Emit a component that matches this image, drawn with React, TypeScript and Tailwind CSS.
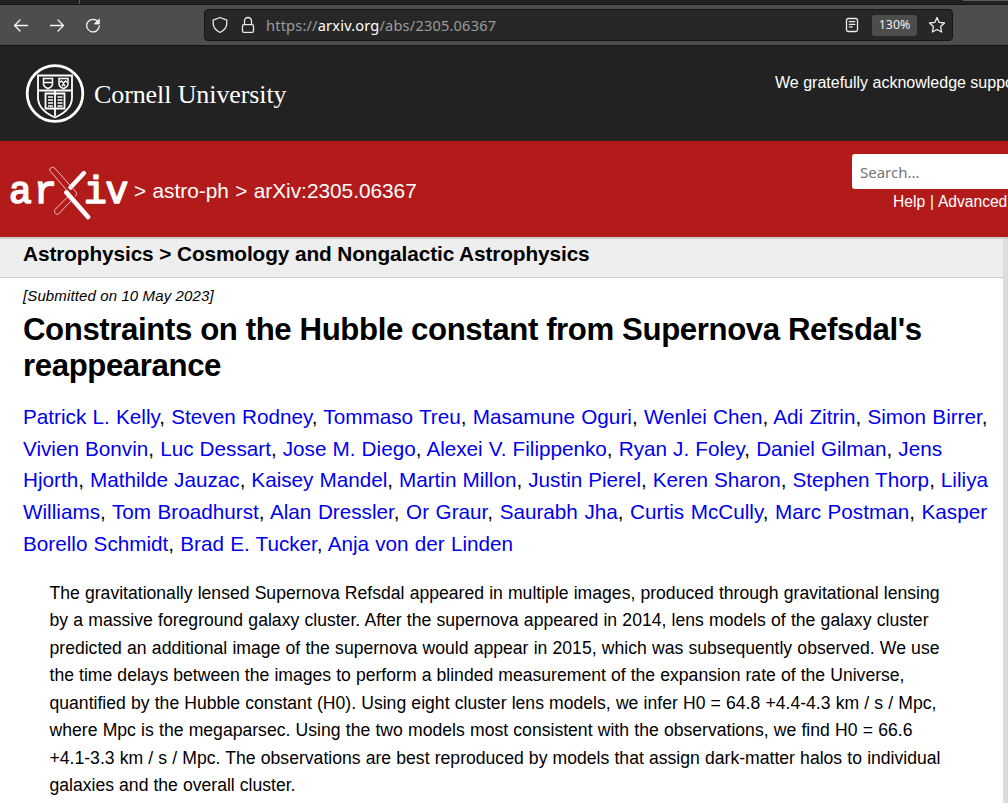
import React from "react";

const authorLines = [
  { width: "w-[964.500px]", names: ["Patrick L. Kelly", "Steven Rodney", "Tommaso Treu", "Masamune Oguri", "Wenlei Chen", "Adi Zitrin", "Simon Birrer"] },
  { width: "w-[919px]", names: ["Vivien Bonvin", "Luc Dessart", "Jose M. Diego", "Alexei V. Filippenko", "Ryan J. Foley", "Daniel Gilman", "Jens"] },
  { width: "w-[965px]", names: ["Hjorth", "Mathilde Jauzac", "Kaisey Mandel", "Martin Millon", "Justin Pierel", "Keren Sharon", "Stephen Thorp", "Liliya"] },
  { width: "w-[964px]", names: ["Williams", "Tom Broadhurst", "Alan Dressler", "Or Graur", "Saurabh Jha", "Curtis McCully", "Marc Postman", "Kasper"] },
  { width: "w-[490px]", names: ["Borello Schmidt", "Brad E. Tucker", "Anja von der Linden"] },
];

const abstractLines = [
  { width: "w-[890px]", text: "The gravitationally lensed Supernova Refsdal appeared in multiple images, produced through gravitational lensing" },
  { width: "w-[879px]", text: "by a massive foreground galaxy cluster. After the supernova appeared in 2014, lens models of the galaxy cluster" },
  { width: "w-[890px]", text: "predicted an additional image of the supernova would appear in 2015, which was subsequently observed. We use" },
  { width: "w-[855px]", text: "the time delays between the images to perform a blinded measurement of the expansion rate of the Universe," },
  { width: "w-[887px]", text: "quantified by the Hubble constant (H0). Using eight cluster lens models, we infer H0 = 64.8 +4.4-4.3 km / s / Mpc," },
  { width: "w-[863px]", text: "where Mpc is the megaparsec. Using the two models most consistent with the observations, we find H0 = 66.6" },
  { width: "w-[891px]", text: "+4.1-3.3 km / s / Mpc. The observations are best reproduced by models that assign dark-matter halos to individual" },
  { width: "w-[246px]", text: "galaxies and the overall cluster." },
];

function Toolbar() {
  return (
    <div className="flex h-[46px] flex-col bg-[#222]">
      <div className="flex h-[4px] shrink-0 justify-between">
        <div className="w-[80px] border-r border-[#5a5a5a]" />
        <div className="h-px w-[45px] bg-[#5a5a5a]" />
      </div>
      <div className="flex h-[42px] shrink-0 items-center border-y border-[#151515] bg-[#4d4d4d]">
        <svg className="ml-[13px]" width="92" height="16" viewBox="0 0 92 16" fill="none" stroke="#f5f5f5" strokeWidth="1.3" strokeLinecap="round" strokeLinejoin="round">
          <path d="M14.5 8.5H1.5M7 3 1.5 8.5 7 14M37.5 8.5h13M45 3l5.500 5.500L45 14" />
          <path d="M84.800 4.500a6.300 6.300 0 1 0 1.500 4.500" />
          <path d="M86.300 2.300v4.700h-4.700z" fill="#f5f5f5" strokeWidth=".8" />
        </svg>
        <div className="ml-[99px] flex h-[32px] w-[749px] items-center rounded-[4px] border border-[#151515] bg-[#272727]">
          <svg className="ml-[7px] shrink-0" width="44" height="18" viewBox="0 0 44 18" fill="none" stroke="#ececec" strokeWidth="1.3" strokeLinejoin="round">
            <path d="M8 1.500 14.800 4.200v3c0 4.500-3.300 7.500-6.800 9.300-3.500-1.800-6.800-4.800-6.800-9.300v-3z" />
            <rect x="30.500" y="8.600" width="11" height="7.800" rx="1.300" />
            <path d="M32.500 8.500V5a3.500 3.500 0 0 1 7 0v3.500" />
          </svg>
          <span className="ml-[10px] w-[232px] whitespace-nowrap pt-[2px] font-['Noto_Sans',sans-serif] text-[14.600px] tracking-[0.180px] text-[#9b9b9b]">
            https://<span className="text-white">arxiv.org</span>/abs/2305.06367
          </span>
          <svg className="ml-[347px] shrink-0" width="14" height="16" viewBox="0 0 14 16" fill="none" stroke="#ececec" strokeWidth="1.300" strokeLinecap="round">
            <rect x="1.500" y="1.500" width="11" height="13" rx="1.800" />
            <path d="M4.300 4.700h5.500M4.300 7.300h5.500M4.300 9.900h3" />
          </svg>
          <span className="ml-[13px] flex h-[21px] w-[45px] shrink-0 items-center justify-center rounded-[3px] bg-[#4d4d4d] pt-px font-['Noto_Sans',sans-serif] text-[12.400px] text-[#eee]">130%</span>
          <svg className="ml-[11px] shrink-0" width="18" height="18" viewBox="0 0 18 18" fill="none" stroke="#ececec" strokeWidth="1.300" strokeLinejoin="round">
            <path d="m9 1.500 2.200 4.900 5.300.6-3.900 3.600 1 5.400L9 13.500 4.400 16l1-5.400L1.500 7l5.300-.6z" />
          </svg>
        </div>
      </div>
    </div>
  );
}

function CornellHeader() {
  return (
    <div className="flex h-[95px] justify-between bg-[#222] text-white">
      <div className="flex pl-[25px] pt-[17px]">
        <svg width="60" height="60" viewBox="0 0 60 60" fill="none" stroke="#fff">
          <circle cx="30" cy="30.500" r="27.800" strokeWidth="2.800" />
          <path d="M13 12.500h34v22c0 9-8 16-17 20-9-4-17-11-17-20zM13 27.500h34" strokeWidth="1.800" />
          <path d="M18.500 15.500h9v5.500c0 2-2 3.500-4.500 4.500-2.500-1-4.500-2.500-4.500-4.500zM34 15.500h9v5.500c0 2-2 3.500-4.500 4.500-2.500-1-4.500-2.500-4.500-4.500z" strokeWidth="1.500" />
          <path d="M19 19.500h8M34.500 19.500l2-1.500 2 2 2-2 2 1.500M37 23l1.500-2 1.500 2" strokeWidth="1.400" />
          <path d="M30 28v25M20.500 30.500h8l1.500 1 1.500-1h8v15h-8L30 46.500l-1.500-1h-8z" strokeWidth="1.800" />
          <path d="M23 34h5M23 37h5M23 40h5M23 43h5M32.500 34h5M32.500 37h5M32.500 40h5M32.500 43h5" strokeWidth="1.500" />
        </svg>
        <span className="ml-[9px] mt-[15px] whitespace-nowrap font-['Liberation_Serif',serif] text-[26px] leading-[34px] tracking-[-0.100px]">Cornell University</span>
      </div>
      <span className="mt-[25px] w-[233px] overflow-hidden whitespace-nowrap text-[16px] leading-[24px]">We gratefully acknowledge support</span>
    </div>
  );
}

function ArxivHeader() {
  return (
    <div className="flex h-[98px] justify-between border-b-2 border-[#ccc] bg-[#b31b1b] text-white">
      <div className="flex">
        <svg className="ml-[9px] mt-[25px]" width="120" height="54" viewBox="0 0 120 54" fill="none">
          <g fill="#fff" stroke="#fff" strokeWidth="1.600" strokeLinejoin="round" fontFamily="Liberation Mono" fontSize="38">
            <text x="0" y="37">a</text>
            <text x="25" y="37">r</text>
            <text x="75" y="37">i</text>
            <text x="96.500" y="37">v</text>
          </g>
          <path d="M75 7 61.500 21.500" stroke="#fff" strokeWidth="4.400" strokeLinecap="round" />
          <path d="M42.500 1.500c-2 .5-2 2.500-1 4l20 23M46.500 3 67 26c1 1.500 1 3-1 4.500M42.500 1.500c2-.8 3 .2 4 1.500M58.500 31 46 43.500c-1.500 3 1 6 3.500 4.500L63 34" stroke="#f0c0c0" strokeWidth="1" />
          <path d="M57.500 26.500 79 51" stroke="#fff" strokeWidth="4.700" strokeLinecap="round" />
        </svg>
        <span className="ml-[5px] mt-[34px] whitespace-nowrap text-[20.800px] leading-[32px] [word-spacing:0.600px]">&gt; astro-ph &gt; arXiv:2305.06367</span>
      </div>
      <div className="flex w-[156px] flex-col overflow-hidden">
        <div className="mt-[13px] flex h-[35px] w-[160px] shrink-0 items-center rounded-[3px] bg-white pl-[8px] pt-px font-['Noto_Sans',sans-serif] text-[15px] text-[#757575]">Search...</div>
        <div className="ml-[41px] mt-px whitespace-nowrap text-[15.600px] leading-[24px] [word-spacing:0.500px]">Help | Advanced Search</div>
      </div>
    </div>
  );
}

export default function App() {
  return (
    <div className="h-[812px] w-[1008px] overflow-hidden bg-white font-['Liberation_Sans',Arial,sans-serif] text-black">
      <Toolbar />
      <CornellHeader />
      <ArxivHeader />
      <div className="flex h-[564px]">
        <main className="w-[1003px] shrink-0">
          <h2 className="h-[39px] whitespace-nowrap border-b border-[#ccc] bg-[#eee] pl-[23px] text-[20.800px] font-bold leading-[30px] tracking-[-0.100px]">
            Astrophysics &gt; Cosmology and Nongalactic Astrophysics
          </h2>
          <div className="pl-[23px]">
            <p className="pt-[6px] text-[15px] italic leading-[24px] tracking-[0.120px]">[Submitted on 10 May 2023]</p>
            <h1 className="mt-[4px] whitespace-nowrap text-[31.200px] font-bold leading-[36px] tracking-[-0.400px]">
              Constraints on the Hubble constant from Supernova Refsdal's
              <br />
              reappearance
            </h1>
            <div className="mt-[17px] text-[20.700px] leading-[31.700px]">
              {authorLines.map(({ width, names }, row) => (
                <div key={row} className={`${width} h-[31.700px] [text-align-last:justify]`}>
                  {names.map((name, i) => (
                    <React.Fragment key={name}>
                      <a className="text-[#0000ee]">{name}</a>
                      {i < names.length - 1 ? ", " : row === 0 ? "," : ""}
                    </React.Fragment>
                  ))}
                </div>
              ))}
            </div>
            <div className="ml-[26.500px] mt-[20.500px] text-[17.600px] leading-[27.450px]">
              {abstractLines.map(({ width, text }) => (
                <div key={text} className={`${width} h-[27.450px] [text-align-last:justify]`}>{text}</div>
              ))}
            </div>
          </div>
        </main>
        <div className="grow bg-[#dcdcdc]" />
      </div>
    </div>
  );
}
